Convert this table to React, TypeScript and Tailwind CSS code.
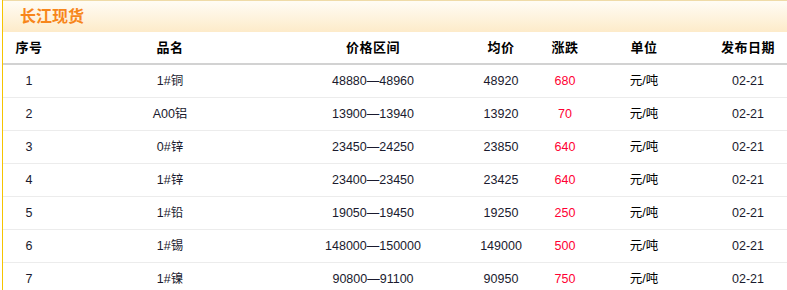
const rows = [
  ["1", "1#铜", "48880—48960", "48920", "680"],
  ["2", "A00铝", "13900—13940", "13920", "70"],
  ["3", "0#锌", "23450—24250", "23850", "640"],
  ["4", "1#锌", "23400—23450", "23425", "640"],
  ["5", "1#铅", "19050—19450", "19250", "250"],
  ["6", "1#锡", "148000—150000", "149000", "500"],
  ["7", "1#镍", "90800—91100", "90950", "750"],
];

const heads = ["序号", "品名", "价格区间", "均价", "涨跌", "单位", "发布日期"];

const cols = "grid grid-cols-[52px_230px_176px_80px_48px_110px_98px] w-[794px] shrink-0";

export default function App() {
  return (
    <div
      className="w-[787px] h-[290px] overflow-hidden bg-white flex"
      style={{ fontFamily: '"Liberation Sans", "Noto Sans CJK SC", sans-serif' }}
    >
      <div className="ml-[2px] border-l border-[#f5c400] flex flex-col">
        <div className="h-[32px] w-[794px] shrink-0 border-t border-[#efdba8] bg-gradient-to-b from-[#fffcf5] to-[#fdebc9] flex items-center pl-[17px]">
          <span className="text-[16px] font-bold text-[#f7861b]">长江现货</span>
        </div>
        <div className={`${cols} h-[33px] border-b-2 border-[#d2d2d2] items-center`}>
          {heads.map((h) => (
            <div key={h} className="text-center text-[13px] font-bold tracking-[0.5px] text-black">
              {h}
            </div>
          ))}
        </div>
        {rows.map((r) => (
          <div key={r[0]} className={`${cols} h-[33px] border-b border-[#ececec] items-center text-[12.5px] text-[#1a1a2e]`}>
            <div className="text-center">{r[0]}</div>
            <div className="text-center">{r[1]}</div>
            <div className="text-center">{r[2]}</div>
            <div className="text-center">{r[3]}</div>
            <div className="text-center text-[#ff0033]">{r[4]}</div>
            <div className="text-center text-black">元/吨</div>
            <div className="text-center">02-21</div>
          </div>
        ))}
      </div>
    </div>
  );
}
